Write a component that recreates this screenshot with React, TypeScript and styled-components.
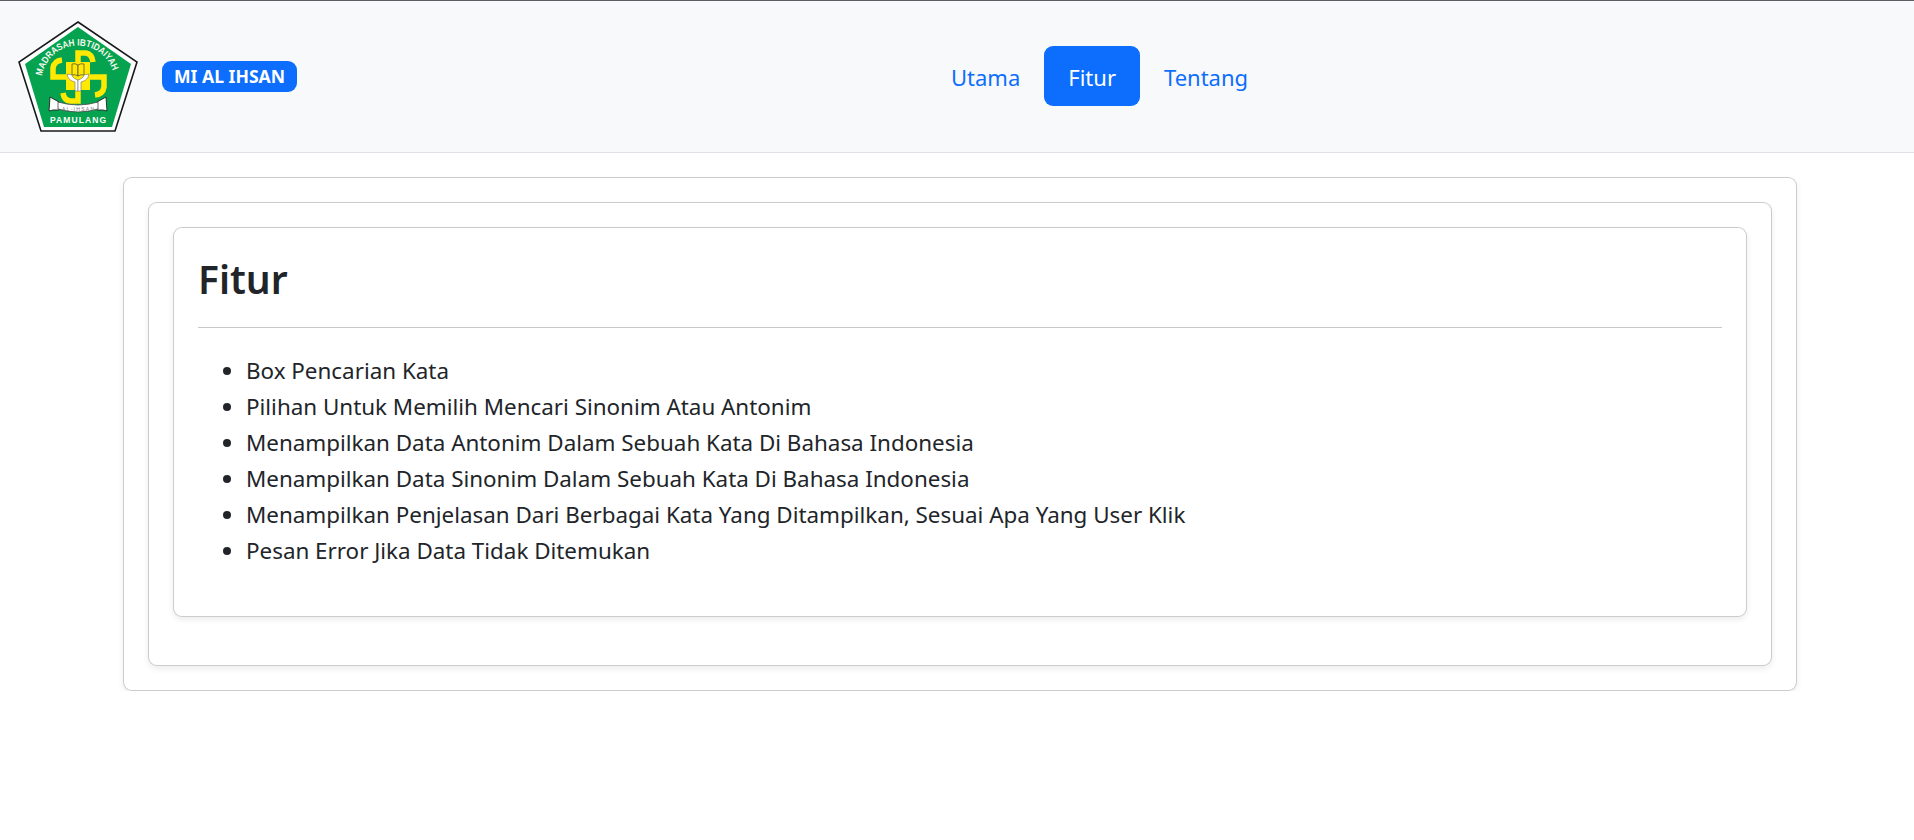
import React from "react";
import styled, { createGlobalStyle } from "styled-components";

const Global = createGlobalStyle`
  html, body { margin: 0; padding: 0; background: #fff; }
  body {
    font-family: "Noto Sans", "Open Sans", sans-serif;
    font-size: 22.4px;
    line-height: 36px;
    color: #212529;
    border-top: 1px solid #5c5f62;
  }
`;

const Navbar = styled.nav`
  display: flex;
  align-items: center;
  height: 151px;
  padding: 0 18px;
  background: #f8f9fa;
  border-bottom: 1px solid #dee2e6;
`;

const Logo = styled.svg`
  display: block;
  width: 120px;
  height: 112px;
  flex: none;
`;

const Badge = styled.span`
  display: block;
  margin-left: 24px;
  margin-top: -1px;
  padding: 0 12px;
  height: 31px;
  line-height: 31px;
  border-radius: 9px;
  background: #0d6efd;
  color: #fff;
  font-size: 17.6px;
  font-weight: 700;
  white-space: nowrap;
`;

const NavList = styled.ul`
  display: flex;
  list-style: none;
  margin: -2px auto 0;
  padding: 0;
  transform: translateX(3px);
  font-size: 22px;
`;

const NavLink = styled.a<{ $active?: boolean }>`
  display: block;
  padding: 13px 24px 11px;
  border-radius: 9px;
  text-decoration: none;
  background: ${(p) => (p.$active ? "#0d6efd" : "transparent")};
  color: ${(p) => (p.$active ? "#fff" : "#0d6efd")};
`;

const Container = styled.main`
  width: 1674px;
  margin: 24px 0 0 123px;
`;

const Card = styled.section<{ $gap?: number }>`
  box-sizing: border-box;
  padding: 24px 24px ${(p) => p.$gap ?? 24}px;
  background: #fff;
  border: 1px solid rgba(0, 0, 0, 0.2);
  border-radius: 9px;
  box-shadow: 0 3px 6px rgba(0, 0, 0, 0.075);
`;

const Title = styled.h2`
  margin: 0;
  padding: 3px 0 0;
  font-size: 39px;
  font-weight: 600;
  line-height: 48px;
`;

const Rule = styled.hr`
  height: 1px;
  margin: 24px 0 25px;
  border: 0;
  background: #c8c8c8;
`;

const List = styled.ul`
  margin: 0 0 23px;
  padding: 0 0 0 48px;
`;

const features = [
  "Box Pencarian Kata",
  "Pilihan Untuk Memilih Mencari Sinonim Atau Antonim",
  "Menampilkan Data Antonim Dalam Sebuah Kata Di Bahasa Indonesia",
  "Menampilkan Data Sinonim Dalam Sebuah Kata Di Bahasa Indonesia",
  "Menampilkan Penjelasan Dari Berbagai Kata Yang Ditampilkan, Sesuai Apa Yang User Klik",
  "Pesan Error Jika Data Tidak Ditemukan",
];

const SchoolLogo = () => (
  <Logo viewBox="0 0 120 112" role="img" aria-label="Logo MI Al Ihsan">
    <polygon points="60,1 119,41 97,110 23,110 1,41" fill="#fff" stroke="#1a1a1a" strokeWidth="1.6" />
    <polygon points="60,6 113,43 94,106 26,106 7,43" fill="#05a34f" />
    <g fill="none" stroke="#ffe900" strokeWidth="5.5">
      <path d="M60 56V32H68Q74 33 75 41" />
      <path d="M60 56H86V66Q85 73 77 74" />
      <path d="M60 56V80H52Q46 79 45 72" />
      <path d="M60 56H35V47Q36 40 44 39" />
    </g>
    <rect x="48" y="41" width="24" height="28" fill="#ffe900" />
    <g fill="#ffe900" stroke="#444" strokeWidth="0.7">
      <path d="M54 43q3-1 6 1v11q-3-2-6-1z" />
      <path d="M66 43q-3-1-6 1v11q3-2 6-1z" />
    </g>
    <path d="M49 53c1 6 5 7 8 8v9h3V59c-3-1-5-2-6-5z" fill="#fff" stroke="#555" strokeWidth="0.5" />
    <path d="M71 53c-1 6-5 7-8 8v9h-3V59c3-1 5-2 6-5z" fill="#fff" stroke="#555" strokeWidth="0.5" />
    <path id="arcText" d="M24 55A36.5 36.5 0 0 1 96 55" fill="none" />
    <text fontFamily="'Liberation Sans', sans-serif" fontWeight="700" fontSize="9.5" fill="#f4f8ee">
      <textPath href="#arcText" textLength="97" lengthAdjust="spacingAndGlyphs">MADRASAH IBTIDAIYAH</textPath>
    </text>
    <path d="M32 76l9 5v8l-6 0-4 1z" fill="#fff" stroke="#222" strokeWidth="0.9" />
    <path d="M88 76l-9 5v8l6 0 4 1z" fill="#fff" stroke="#222" strokeWidth="0.9" />
    <path d="M40 81Q60 87 80 81V88Q60 94 40 88Z" fill="#fff" stroke="#444" strokeWidth="0.8" />
    <text x="60" y="90" textAnchor="middle" fontFamily="'Liberation Sans', sans-serif" fontSize="5" fill="#777" textLength="32">AL-IHSAN</text>
    <text x="60" y="102" textAnchor="middle" fontFamily="'Liberation Sans', sans-serif" fontWeight="700" fontSize="8.5" fill="#fff" textLength="56">PAMULANG</text>
  </Logo>
);

export default function App() {
  return (
    <>
      <Global />
      <Navbar>
        <SchoolLogo />
        <Badge>MI AL IHSAN</Badge>
        <NavList>
          <li><NavLink href="#utama">Utama</NavLink></li>
          <li><NavLink href="#fitur" $active>Fitur</NavLink></li>
          <li><NavLink href="#tentang">Tentang</NavLink></li>
        </NavList>
      </Navbar>
      <Container>
        <Card>
          <Card $gap={48}>
            <Card>
              <Title>Fitur</Title>
              <Rule />
              <List>
                {features.map((f) => (
                  <li key={f}>{f}</li>
                ))}
              </List>
            </Card>
          </Card>
        </Card>
      </Container>
    </>
  );
}
